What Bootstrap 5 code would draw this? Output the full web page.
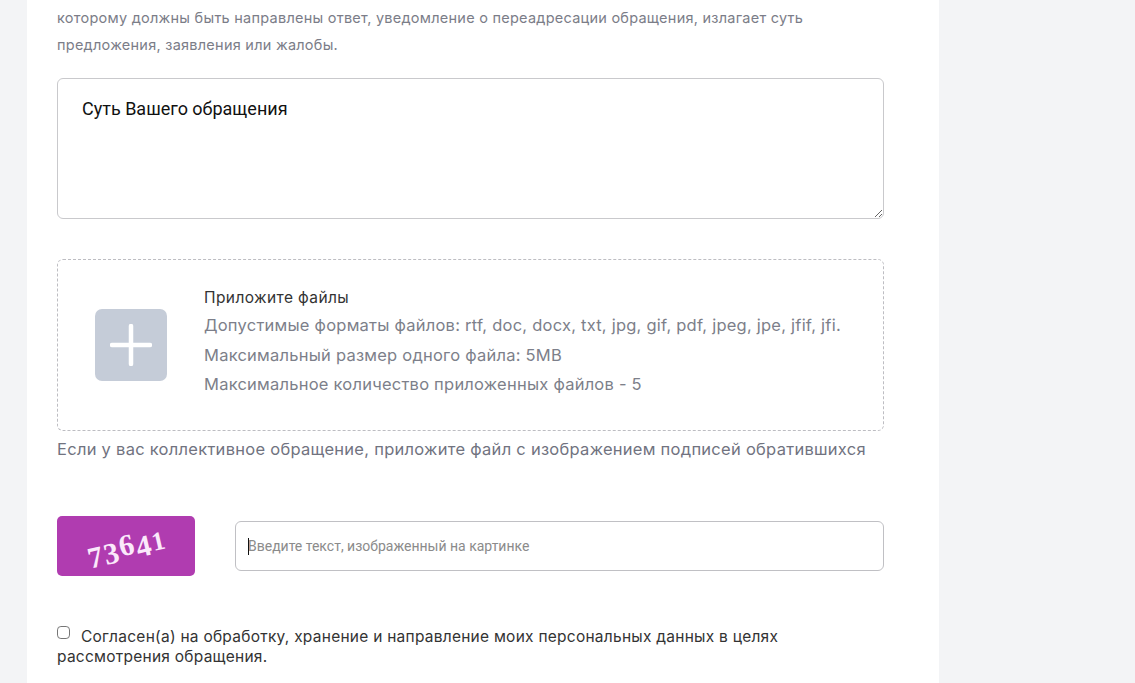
<!DOCTYPE html>
<html lang="ru">
<head>
<meta charset="utf-8">
<title>Обращение</title>
<link rel="stylesheet" href="https://cdn.jsdelivr.net/npm/bootstrap@5.3.0/dist/css/bootstrap.min.css">
<style>
html,body{height:683px;overflow:hidden}
body{background:#f3f4f6;font-family:"Inter","Noto Sans",sans-serif;color:#111}
.sheet{width:912px;height:683px;margin-left:27px;background:#fff;padding:4px 55px 0 30px}
.lead-note{font-size:14.5px;letter-spacing:.25px;line-height:27px;color:#7b7d88;margin:0 0 20px}
.msg-area{height:141px;border:1px solid #c9c9cc;border-radius:6px;padding:19px 24px;font:18px/22px Roboto,sans-serif;margin-bottom:40px}
.msg-area::placeholder{color:#111;opacity:1}
.drop-zone{height:172px;border:1px dashed #bdbdc2;border-radius:6px;padding-left:37px;gap:37px}
.plus-tile{width:72px;height:72px;background:#c5ccd8;border-radius:7px;flex:none}
.drop-text{padding-bottom:5px}
.drop-title{font-size:15.5px;letter-spacing:.4px;line-height:26px;color:#333}
.drop-line{font-size:16.5px;letter-spacing:.23px;line-height:29.5px;color:#7d7f8a}
.collective{font-size:16.5px;letter-spacing:.27px;line-height:24px;color:#71737f;margin:6px 0 0}
.captcha-row{margin-top:55px;gap:40px}
.captcha-pic{width:138px;height:60px;background:#b03cb0;border-radius:5px;flex:none}
.captcha-code{font:700 30px "Liberation Serif",serif;color:#fbe9fb;transform:rotate(-13deg);letter-spacing:1.5px}
.captcha-code b{display:inline-block;font-weight:700}
.captcha-code .dn{transform:translateY(4px)}
.captcha-code .up{transform:translateY(-1px)}
.captcha-code .sm{transform:translateY(1px);font-size:26px}
.captcha-box{flex:1;position:relative}
.captcha-input{height:50px;border:1px solid #c0c0c4;border-radius:6px;padding:0 12px;font:14px Roboto,sans-serif}
.captcha-input::placeholder{color:#8b8b8b;opacity:1}
.caret-mark{position:absolute;left:13px;top:17px;width:1px;height:17px;background:#111}
.agree{margin-top:50px;font-size:15.5px;letter-spacing:.25px;line-height:20px;color:#333}
.agree label{display:inline}
.agree-box{width:13px;height:13px;margin:0 11px 0 0;vertical-align:3px;border-radius:2px;border:1px solid #767676;float:none;display:inline-block}
</style>
</head>
<body>
<main class="sheet">
  <p class="lead-note">которому должны быть направлены ответ, уведомление о переадресации обращения, излагает суть предложения, заявления или жалобы.</p>
  <textarea class="form-control msg-area" placeholder="Суть Вашего обращения"></textarea>
  <div class="drop-zone d-flex align-items-center">
    <div class="plus-tile d-flex align-items-center justify-content-center">
      <svg width="42" height="42" viewBox="0 0 42 42" fill="none" stroke="#fff" stroke-width="4.5" stroke-linecap="round"><path d="M21 2v38M2 21h38"/></svg>
    </div>
    <div class="drop-text">
      <div class="drop-title">Приложите файлы</div>
      <div class="drop-line">Допустимые форматы файлов: rtf, doc, docx, txt, jpg, gif, pdf, jpeg, jpe, jfif, jfi.</div>
      <div class="drop-line">Максимальный размер одного файла: 5MB</div>
      <div class="drop-line">Максимальное количество приложенных файлов - 5</div>
    </div>
  </div>
  <p class="collective">Если у вас коллективное обращение, приложите файл с изображением подписей обратившихся</p>
  <div class="captcha-row d-flex align-items-center">
    <div class="captcha-pic d-flex align-items-center justify-content-center"><span class="captcha-code"><b class="dn">7</b><b class="dn">3</b><b class="up">6</b><b class="dn">4</b><b class="sm">1</b></span></div>
    <div class="captcha-box">
      <input class="form-control captcha-input" type="text" placeholder="Введите текст, изображенный на картинке">
      <span class="caret-mark"></span>
    </div>
  </div>
  <div class="agree">
    <input class="form-check-input agree-box" type="checkbox" id="agree"><label for="agree">Согласен(а) на обработку, хранение и направление моих персональных данных в целях рассмотрения обращения.</label>
  </div>
</main>
<script src="https://cdn.jsdelivr.net/npm/bootstrap@5.3.0/dist/js/bootstrap.bundle.min.js"></script>
</body>
</html>
